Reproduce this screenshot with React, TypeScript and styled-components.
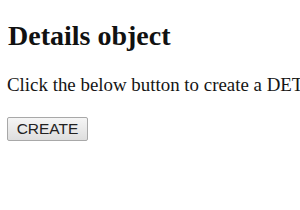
import React from "react";
import styled, { createGlobalStyle } from "styled-components";

const Global = createGlobalStyle`
  html, body { margin: 0; padding: 0; background: #fff; overflow: hidden; }
  body { font-family: "Liberation Serif", "Times New Roman", serif; color: #000; }
`;

const Page = styled.div`
  display: flex;
  flex-direction: column;
  align-items: flex-start;
  padding: 20px 0 0 7px;
  width: 600px;
`;

const Title = styled.h2`
  font-size: 28px;
  line-height: 32px;
  font-weight: bold;
  margin: 0 0 22px 1px;
  color: #111;
`;

const Text = styled.p`
  font-size: 18.9px;
  line-height: 21px;
  margin: 0 0 22px;
  white-space: nowrap;
  color: #151515;
`;

const Button = styled.button`
  box-sizing: border-box;
  width: 81px;
  height: 24px;
  padding: 0;
  font-family: "Liberation Sans", Arial, sans-serif;
  font-size: 15.5px;
  color: #222;
  border: 1px solid #a8a8a8;
  border-radius: 2px;
  background: linear-gradient(#f5f5f5, #dedede);
`;

export default function App() {
  return (
    <>
      <Global />
      <Page>
        <Title>Details object</Title>
        <Text>Click the below button to create a DETAILS element.</Text>
        <Button>CREATE</Button>
      </Page>
    </>
  );
}
